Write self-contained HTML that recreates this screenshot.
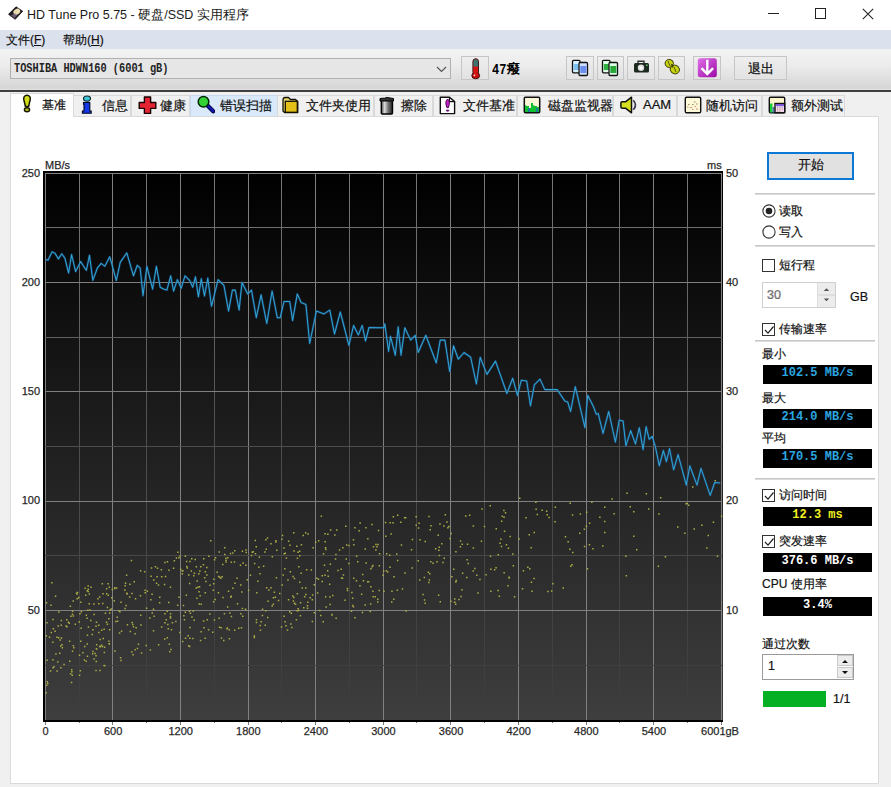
<!DOCTYPE html>
<html><head><meta charset="utf-8">
<style>
*{box-sizing:border-box;}
html,body{margin:0;padding:0;}
body{width:891px;height:787px;position:relative;overflow:hidden;background:#f0f0f0;font-family:"Liberation Sans",sans-serif;color:#000;font-size:12px;}
.a{position:absolute;white-space:nowrap;}
#title{left:0;top:0;width:891px;height:30px;background:#fff;}
#menu{left:0;top:30px;width:891px;height:19px;background:#dce2ed;}
#tool{left:0;top:49px;width:891px;height:41px;background:linear-gradient(#f3f3f3,#ececec 40%,#d6d6d6 96%,#e6e6e6);}
#sep{left:0;top:90px;width:891px;height:2px;background:#3f3f3f;}
.btn{position:absolute;background:linear-gradient(#eeeeee,#e2e2e2);border:1px solid #c6c6c6;}
.tab{position:absolute;top:95px;height:21px;background:#f0f0f0;border:1px solid #d9d9d9;border-bottom:none;}
.tab .t{position:absolute;top:2px;font-size:12.5px;color:#111;-webkit-text-stroke:0.2px #111;white-space:nowrap;}
.tab svg{position:absolute;}
#page{left:10px;top:116px;width:869px;height:668px;background:#fff;border:1px solid #dadada;}
.lbl{position:absolute;font-size:12px;color:#111;-webkit-text-stroke:0.2px #111;white-space:nowrap;}
.box{position:absolute;left:763px;width:109px;height:19px;background:#000;}
.box span{position:absolute;top:3px;left:0;width:100%;text-align:center;font-family:"Liberation Mono",monospace;font-weight:bold;font-size:12px;line-height:10px;}
.hsep{position:absolute;left:755px;width:120px;height:2px;background:#dcdcdc;border-top:1px solid #c8c8c8;}
.cb{position:absolute;left:762px;width:13px;height:13px;border:1px solid #333;background:#fff;}
</style></head><body>

<div id="title" class="a">
  <svg class="a" style="left:7px;top:5px" width="17" height="16" viewBox="0 0 17 16">
    <path d="M1.5 9.3 L9 1.8 L15.7 6.2 L8.2 14.3 Z" fill="#1e1a22" stroke="#111" stroke-width="0.8" stroke-linejoin="round"/>
    <ellipse cx="9.8" cy="6.8" rx="3.6" ry="2.8" transform="rotate(-35 9.8 6.8)" fill="#e9dcae"/>
    <path d="M4 10.5 L8 8 L10.5 10 L7.5 13 Z" fill="#8a7890" opacity="0.7"/>
  </svg>
  <div class="a" style="left:27px;top:7px;font-size:12.5px;color:#1a1a1a;">HD Tune Pro 5.75 - 硬盘/SSD 实用程序</div>
  <div class="a" style="left:768px;top:13px;width:11px;height:1px;background:#222"></div>
  <div class="a" style="left:815px;top:8px;width:11px;height:11px;border:1px solid #222"></div>
  <svg class="a" style="left:862px;top:8px" width="12" height="12"><path d="M0.8 0.8L11.2 11.2M11.2 0.8L0.8 11.2" stroke="#222" stroke-width="1.05"/></svg>
</div>

<div id="menu" class="a">
  <div class="a" style="left:6px;top:2px;font-size:12px;color:#111;-webkit-text-stroke:0.2px #111">文件(<u>F</u>)</div>
  <div class="a" style="left:63px;top:2px;font-size:12px;color:#111;-webkit-text-stroke:0.2px #111">帮助(<u>H</u>)</div>
</div>

<div id="tool" class="a">
  <div class="a" style="left:10px;top:9px;width:441px;height:21px;background:#e6e6e6;border:1px solid #b0b0b0;"></div>
  <div class="a" style="left:14px;top:13px;font-family:'Liberation Mono',monospace;font-weight:bold;font-size:10.3px;line-height:10px;color:#222;transform:scaleY(1.2);transform-origin:0 0">TOSHIBA HDWN160 (6001 gB)</div>
  <svg class="a" style="left:436px;top:17px" width="11" height="7"><path d="M1 1L5.5 5.5L10 1" stroke="#555" fill="none" stroke-width="1.2"/></svg>

  <div class="btn" style="left:461px;top:7px;width:28px;height:24px;"></div>
  <svg class="a" style="left:470px;top:9px" width="12" height="22" viewBox="0 0 12 22">
    <rect x="2.9" y="0.7" width="5.6" height="16" rx="2.8" fill="#d41414" stroke="#2a0a0a" stroke-width="0.9"/>
    <path d="M3.4 3.4 Q3.4 1.2 5.7 1.2 Q8 1.2 8 3.4 V8.5 H3.4Z" fill="#3a7470"/>
    <ellipse cx="5.7" cy="17.6" rx="3.9" ry="3.2" fill="#c80c0c" stroke="#2a0a0a" stroke-width="0.9"/>
    <rect x="3.6" y="9" width="4.2" height="9" fill="#d41414"/>
    <circle cx="4.4" cy="17.3" r="0.9" fill="#fff" opacity="0.85"/>
  </svg>
  <div class="a" style="left:492px;top:16px;font-family:'Liberation Mono',monospace;font-weight:bold;font-size:12px;line-height:10px;transform:scaleY(1.2);">47</div>
  <div class="a" style="left:507px;top:12px;font-size:12.5px;font-weight:bold;">癈</div>

  <div class="btn" style="left:566px;top:7px;width:28px;height:24px;"></div>
  <svg class="a" style="left:571px;top:10px" width="18" height="18" viewBox="0 0 18 18">
    <rect x="1.5" y="1.3" width="7.5" height="12.5" rx="1" fill="#d8f0ff" stroke="#111" stroke-width="1.3"/>
    <rect x="2.8" y="5" width="5" height="6" fill="#7cc0f0"/>
    <rect x="8" y="3.5" width="8.5" height="13" rx="1" fill="#cfe2ff" stroke="#111" stroke-width="1.3"/>
    <rect x="9.3" y="7" width="6" height="7" fill="#6c8ef0"/>
  </svg>
  <div class="btn" style="left:597px;top:7px;width:27px;height:24px;"></div>
  <svg class="a" style="left:601px;top:10px" width="18" height="18" viewBox="0 0 18 18">
    <rect x="1.5" y="1.3" width="7.5" height="12.5" rx="1" fill="#e0ffe8" stroke="#111" stroke-width="1.3"/>
    <rect x="2.8" y="5" width="5" height="6" fill="#30b040"/>
    <rect x="8" y="3.5" width="8.5" height="13" rx="1" fill="#e0ffe8" stroke="#111" stroke-width="1.3"/>
    <rect x="9.3" y="7" width="6" height="7" fill="#28a838"/>
  </svg>
  <div class="btn" style="left:627px;top:7px;width:28px;height:24px;"></div>
  <svg class="a" style="left:633px;top:11px" width="17" height="14" viewBox="0 0 17 14">
    <path d="M5 3 V1.2 H11 V3" fill="none" stroke="#333" stroke-width="1.4"/>
    <rect x="1" y="3" width="15" height="9.5" rx="1.5" fill="#1c2a20"/>
    <circle cx="8" cy="7.8" r="3.2" fill="#ddd"/>
    <circle cx="8" cy="7.8" r="1.6" fill="#fff"/>
    <rect x="13" y="4.5" width="1.5" height="1.5" fill="#6c6"/>
  </svg>
  <div class="btn" style="left:658px;top:7px;width:27px;height:24px;"></div>
  <svg class="a" style="left:663px;top:9px" width="19" height="18" viewBox="0 0 19 18">
    <g stroke="#2a2a00" stroke-width="0.9" fill="#c8d412">
      <path d="M2 5 Q3 1 7 1.5 Q10.5 2 10.5 5.5 Q10 9 6.5 9.5 Q2.5 9.5 2 5Z"/>
      <path d="M7 11 Q7.5 7.5 11.5 7 Q15.5 7 16.5 11 Q16.5 15.5 12 16 Q7.5 15.5 7 11Z"/>
    </g>
    <path d="M5 3 L7 8 M11 9 L13 14" stroke="#5a5a10" stroke-width="1"/>
    <path d="M8.5 6 L10 9.5" stroke="#3a3a00" stroke-width="1.2"/>
  </svg>
  <div class="btn" style="left:693px;top:7px;width:28px;height:24px;"></div>
  <svg class="a" style="left:697px;top:9px" width="21" height="20" viewBox="0 0 21 20">
    <defs><linearGradient id="pg" x1="0" y1="0" x2="1" y2="1"><stop offset="0" stop-color="#e070e8"/><stop offset="1" stop-color="#9a0aa6"/></linearGradient></defs>
    <rect x="0.8" y="0.3" width="19" height="19" rx="2.5" fill="url(#pg)"/>
    <path d="M10.3 1.8 V16 M4.5 10.2 L10.3 16 L16.1 10.2" stroke="#fff" stroke-width="2.4" fill="none" stroke-linejoin="miter"/>
  </svg>
  <div class="btn" style="left:734px;top:7px;width:53px;height:24px;"></div>
  <div class="a" style="left:748px;top:12px;font-size:12.5px;color:#111;-webkit-text-stroke:0.25px #111">退出</div>
</div>
<div id="sep" class="a"></div>

<div id="page" class="a"></div>

<div class="tab" style="left:10px;top:93px;width:64px;height:24px;background:#fff;z-index:2;border-color:#d9d9d9">
  <svg style="left:11px;top:0px" width="10" height="19" viewBox="0 0 10 19">
    <path d="M5 1.3 C7.6 1.3 8.6 3.3 8.2 5.5 L6.6 12.4 H3.4 L1.8 5.5 C1.4 3.3 2.4 1.3 5 1.3Z" fill="#d2dc18" stroke="#161600" stroke-width="1.5"/>
    <ellipse cx="5" cy="15.8" rx="2.6" ry="2" fill="#b8c020" stroke="#161600" stroke-width="1.4"/>
  </svg>
  <span class="t" style="left:31px;top:3px;font-size:12px">基准</span></div>
<div class="tab" style="left:73px;width:58px;">
  <svg style="left:7px;top:-1px" width="12" height="19" viewBox="0 0 12 19">
    <ellipse cx="6" cy="3.6" rx="3.5" ry="2.6" fill="#40c4dc" stroke="#0a2a30" stroke-width="1.2"/>
    <path d="M2.5 7.5 H8.8 V16 H10.2 V18.2 H1.4 V16 H3 V9.3 H2.5Z" fill="#1438e8" stroke="#00061a" stroke-width="1.1"/>
  </svg>
  <span class="t" style="left:28px">信息</span></div>
<div class="tab" style="left:131px;width:59px;">
  <svg style="left:6px;top:0px" width="19" height="18" viewBox="0 0 19 18">
    <path d="M6.4 1 H12.6 V6.5 H17.8 V12.4 H12.6 V17.4 H6.4 V12.4 H1.2 V6.5 H6.4Z" fill="#e42432" stroke="#1a0000" stroke-width="1.4" stroke-linejoin="round"/>
  </svg>
  <span class="t" style="left:28px">健康</span></div>
<div class="tab" style="left:190px;width:88px;background:#d9e9f9;border-color:#c8daf0">
  <svg style="left:5px;top:-1px" width="19" height="19" viewBox="0 0 19 19">
    <path d="M11.5 10.5 L17.2 16.3" stroke="#000050" stroke-width="4.2" stroke-linecap="round"/>
    <path d="M11.5 10.5 L17 16" stroke="#1818b0" stroke-width="2.4" stroke-linecap="round"/>
    <circle cx="7.5" cy="6.8" r="5.3" fill="#34d234" stroke="#002800" stroke-width="1.5"/>
  </svg>
  <span class="t" style="left:29px">错误扫描</span></div>
<div class="tab" style="left:277px;width:97px;">
  <svg style="left:4px;top:0px" width="18" height="18" viewBox="0 0 18 18">
    <path d="M1 4 Q1 1.5 3 1.5 H6.5 L8.5 3.5 H13.5 L15.8 5.5 V16.5 H2.5 L1 15Z" fill="#e6d870" stroke="#141000" stroke-width="1.3" stroke-linejoin="round"/>
    <rect x="3.3" y="5.3" width="12" height="11" fill="#e2c018" stroke="#141000" stroke-width="1.3"/>
  </svg>
  <span class="t" style="left:28px">文件夹使用</span></div>
<div class="tab" style="left:374px;width:59px;">
  <svg style="left:4px;top:0px" width="16" height="19" viewBox="0 0 16 19">
    <defs><linearGradient id="tg" x1="0" x2="1"><stop offset="0" stop-color="#444"/><stop offset="0.3" stop-color="#ddd"/><stop offset="0.6" stop-color="#777"/><stop offset="1" stop-color="#222"/></linearGradient></defs>
    <path d="M2.3 4 H13.5 V17 Q13.5 18 12.5 18 H3.3 Q2.3 18 2.3 17Z" fill="url(#tg)" stroke="#000" stroke-width="1.4"/>
    <path d="M1 2.5 Q4 2 6 2.3 Q7 1 8.5 1.5 Q11 2 14.5 2.5 V5 H1Z" fill="#333" stroke="#000" stroke-width="1"/>
  </svg>
  <span class="t" style="left:26px">擦除</span></div>
<div class="tab" style="left:433px;width:84px;">
  <svg style="left:5px;top:0px" width="17" height="19" viewBox="0 0 17 19">
    <path d="M1.3 1.3 H10.5 L15.6 5.6 V17.6 H1.3Z" fill="#fff" stroke="#111" stroke-width="1.4" stroke-linejoin="round"/>
    <path d="M10.5 1.3 V5.6 H15.6" fill="none" stroke="#111" stroke-width="1.1"/>
    <path d="M8.6 3 C10.6 4.5 11 7 9.5 11.6 H7.8 C6.2 7 6.6 4.5 8.6 3Z" fill="#c020c8" stroke="#400040" stroke-width="0.9"/>
    <ellipse cx="8.6" cy="14.6" rx="1.8" ry="1.1" fill="#702070"/>
  </svg>
  <span class="t" style="left:29px">文件基准</span></div>
<div class="tab" style="left:517px;width:96px;">
  <svg style="left:5px;top:0px" width="18" height="18" viewBox="0 0 18 18">
    <rect x="1.3" y="1.3" width="15.4" height="15.4" rx="1" fill="#fdf6d8" stroke="#111" stroke-width="1.5"/>
    <path d="M2 9 L4 10 V16 H2Z M4 10 H6 V12 H8 V7 H10 V9 L12 10 V16 H4Z M12 10 H14 V11 H16 V16 H12Z" fill="#10c030"/>
    <path d="M5 12 H7 V16 H5Z M13 12 H15 V16 H13Z" fill="#1a7aa0"/>
  </svg>
  <span class="t" style="left:30px">磁盘监视器</span></div>
<div class="tab" style="left:613px;width:64px;">
  <svg style="left:6px;top:0px" width="19" height="18" viewBox="0 0 19 18">
    <path d="M11.5 1.2 V16.8 L5.5 12.2 H2.2 Q0.9 12.2 0.9 10.9 V7.1 Q0.9 5.8 2.2 5.8 H5.5Z" fill="#d6e020" stroke="#111" stroke-width="1.5" stroke-linejoin="round"/>
    <path d="M13.3 4.2 Q17.6 9 13.3 13.8" fill="none" stroke="#3c3650" stroke-width="1.7"/>
  </svg>
  <span class="t" style="left:29px;font-size:13px;top:1px">AAM</span></div>
<div class="tab" style="left:677px;width:85px;">
  <svg style="left:6px;top:0px" width="18" height="18" viewBox="0 0 18 18">
    <rect x="1.3" y="1.3" width="15.4" height="15.4" rx="1.2" fill="#fcf8d8" stroke="#111" stroke-width="1.4"/>
    <g fill="#9a8a60"><rect x="4" y="8" width="1.5" height="1"/><rect x="8" y="8" width="1.5" height="1"/><rect x="10" y="5.5" width="1.5" height="1"/><rect x="12" y="7.5" width="1.5" height="1"/></g>
    <g fill="#d89070"><rect x="3" y="10.5" width="1.5" height="1"/><rect x="6" y="11" width="2" height="1"/><rect x="10.5" y="10" width="1.5" height="1"/><rect x="8" y="13" width="1.5" height="1"/><rect x="12" y="12.5" width="2" height="1"/></g>
  </svg>
  <span class="t" style="left:28px">随机访问</span></div>
<div class="tab" style="left:762px;width:83px;">
  <svg style="left:5px;top:0px" width="18" height="18" viewBox="0 0 18 18">
    <rect x="1.3" y="1.3" width="15.4" height="15.4" rx="1.2" fill="#fcf6cc" stroke="#111" stroke-width="1.4"/>
    <rect x="2" y="7.5" width="2.5" height="9" fill="#18d038"/>
    <rect x="4.5" y="11" width="2" height="5.5" fill="#4a70b0"/>
    <rect x="7" y="7.5" width="9.7" height="9.2" fill="#f0d8f0" stroke="#111" stroke-width="1.4"/>
    <rect x="7.6" y="8.2" width="8.5" height="1.6" fill="#6a40d8"/>
    <g fill="#7878a8"><rect x="9" y="10.5" width="1.2" height="1"/><rect x="11.3" y="10.5" width="1.2" height="1"/><rect x="13.6" y="10.5" width="1.2" height="1"/></g>
    <g fill="#c09070"><rect x="9" y="12.6" width="1.2" height="1"/><rect x="11.3" y="12.6" width="1.2" height="1"/><rect x="13.6" y="12.6" width="1.2" height="1"/><rect x="9" y="14.6" width="1.2" height="1"/><rect x="11.3" y="14.6" width="1.2" height="1"/></g>
  </svg>
  <span class="t" style="left:28px">额外测试</span></div>

<svg class="a" style="left:0;top:0" width="891" height="787" viewBox="0 0 891 787">
<defs><linearGradient id="bg" x1="0" y1="0" x2="0" y2="1"><stop offset="0" stop-color="#000"/><stop offset="1" stop-color="#3e3e3e"/></linearGradient><linearGradient id="mg" gradientUnits="userSpaceOnUse" x1="0" y1="173" x2="0" y2="720"><stop offset="0" stop-color="#787878"/><stop offset="0.5" stop-color="#4e4e4e"/><stop offset="1" stop-color="#3c3c3c"/></linearGradient></defs>
<rect x="43" y="171" width="680" height="551" fill="#000"/>
<rect x="45" y="173" width="678" height="547" fill="url(#bg)"/>
<line x1="45.5" y1="173" x2="45.5" y2="720" stroke="#808080" stroke-width="1"/>
<line x1="79.5" y1="173" x2="79.5" y2="720" stroke="url(#mg)" stroke-width="1"/>
<line x1="112.5" y1="173" x2="112.5" y2="720" stroke="#808080" stroke-width="1"/>
<line x1="146.5" y1="173" x2="146.5" y2="720" stroke="url(#mg)" stroke-width="1"/>
<line x1="180.5" y1="173" x2="180.5" y2="720" stroke="#808080" stroke-width="1"/>
<line x1="214.5" y1="173" x2="214.5" y2="720" stroke="url(#mg)" stroke-width="1"/>
<line x1="248.5" y1="173" x2="248.5" y2="720" stroke="#808080" stroke-width="1"/>
<line x1="281.5" y1="173" x2="281.5" y2="720" stroke="url(#mg)" stroke-width="1"/>
<line x1="315.5" y1="173" x2="315.5" y2="720" stroke="#808080" stroke-width="1"/>
<line x1="349.5" y1="173" x2="349.5" y2="720" stroke="url(#mg)" stroke-width="1"/>
<line x1="383.5" y1="173" x2="383.5" y2="720" stroke="#808080" stroke-width="1"/>
<line x1="416.5" y1="173" x2="416.5" y2="720" stroke="url(#mg)" stroke-width="1"/>
<line x1="450.5" y1="173" x2="450.5" y2="720" stroke="#808080" stroke-width="1"/>
<line x1="484.5" y1="173" x2="484.5" y2="720" stroke="url(#mg)" stroke-width="1"/>
<line x1="518.5" y1="173" x2="518.5" y2="720" stroke="#808080" stroke-width="1"/>
<line x1="552.5" y1="173" x2="552.5" y2="720" stroke="url(#mg)" stroke-width="1"/>
<line x1="586.5" y1="173" x2="586.5" y2="720" stroke="#808080" stroke-width="1"/>
<line x1="619.5" y1="173" x2="619.5" y2="720" stroke="url(#mg)" stroke-width="1"/>
<line x1="653.5" y1="173" x2="653.5" y2="720" stroke="#808080" stroke-width="1"/>
<line x1="687.5" y1="173" x2="687.5" y2="720" stroke="url(#mg)" stroke-width="1"/>
<line x1="721.5" y1="173" x2="721.5" y2="720" stroke="#808080" stroke-width="1"/>
<line x1="45" y1="173.5" x2="722" y2="173.5" stroke="#808080" stroke-width="1"/>
<line x1="45" y1="227.5" x2="722" y2="227.5" stroke="url(#mg)" stroke-width="1"/>
<line x1="45" y1="282.5" x2="722" y2="282.5" stroke="#808080" stroke-width="1"/>
<line x1="45" y1="337.5" x2="722" y2="337.5" stroke="url(#mg)" stroke-width="1"/>
<line x1="45" y1="391.5" x2="722" y2="391.5" stroke="#808080" stroke-width="1"/>
<line x1="45" y1="446.5" x2="722" y2="446.5" stroke="url(#mg)" stroke-width="1"/>
<line x1="45" y1="501.5" x2="722" y2="501.5" stroke="#808080" stroke-width="1"/>
<line x1="45" y1="555.5" x2="722" y2="555.5" stroke="url(#mg)" stroke-width="1"/>
<line x1="45" y1="610.5" x2="722" y2="610.5" stroke="#808080" stroke-width="1"/>
<line x1="45" y1="665.5" x2="722" y2="665.5" stroke="url(#mg)" stroke-width="1"/>
<path d="M350.8 610.5h1.5v1.5h-1.5zM169.8 617.2h1.5v1.5h-1.5zM108.6 586.6h1.5v1.5h-1.5zM513.8 596.0h1.5v1.5h-1.5zM151.5 612.2h1.5v1.5h-1.5zM173.6 560.0h1.5v1.5h-1.5zM354.2 617.0h1.5v1.5h-1.5zM258.1 566.5h1.5v1.5h-1.5zM45.4 691.9h1.5v1.5h-1.5zM94.4 652.7h1.5v1.5h-1.5zM103.9 664.9h1.5v1.5h-1.5zM124.8 582.5h1.5v1.5h-1.5zM583.8 545.8h1.5v1.5h-1.5zM133.5 580.9h1.5v1.5h-1.5zM188.9 645.8h1.5v1.5h-1.5zM187.4 634.9h1.5v1.5h-1.5zM189.2 626.8h1.5v1.5h-1.5zM245.3 549.3h1.5v1.5h-1.5zM209.3 584.4h1.5v1.5h-1.5zM168.6 643.4h1.5v1.5h-1.5zM213.7 619.2h1.5v1.5h-1.5zM329.9 529.3h1.5v1.5h-1.5zM448.2 525.8h1.5v1.5h-1.5zM91.5 633.8h1.5v1.5h-1.5zM460.3 595.8h1.5v1.5h-1.5zM56.2 636.6h1.5v1.5h-1.5zM164.1 613.1h1.5v1.5h-1.5zM139.9 570.1h1.5v1.5h-1.5zM59.4 639.2h1.5v1.5h-1.5zM95.9 648.3h1.5v1.5h-1.5zM467.5 562.7h1.5v1.5h-1.5zM99.2 669.8h1.5v1.5h-1.5zM101.6 582.9h1.5v1.5h-1.5zM370.1 586.0h1.5v1.5h-1.5zM217.9 575.8h1.5v1.5h-1.5zM181.9 640.7h1.5v1.5h-1.5zM179.2 631.7h1.5v1.5h-1.5zM439.2 523.2h1.5v1.5h-1.5zM232.1 587.5h1.5v1.5h-1.5zM189.7 612.6h1.5v1.5h-1.5zM95.5 660.7h1.5v1.5h-1.5zM57.9 636.9h1.5v1.5h-1.5zM140.2 624.3h1.5v1.5h-1.5zM507.7 547.6h1.5v1.5h-1.5zM52.3 666.9h1.5v1.5h-1.5zM229.1 612.3h1.5v1.5h-1.5zM657.6 565.6h1.5v1.5h-1.5zM132.8 626.0h1.5v1.5h-1.5zM299.7 615.0h1.5v1.5h-1.5zM485.3 574.1h1.5v1.5h-1.5zM101.0 629.5h1.5v1.5h-1.5zM374.5 595.9h1.5v1.5h-1.5zM585.7 525.6h1.5v1.5h-1.5zM140.0 614.4h1.5v1.5h-1.5zM686.6 502.7h1.5v1.5h-1.5zM255.7 621.7h1.5v1.5h-1.5zM432.3 562.4h1.5v1.5h-1.5zM454.1 601.5h1.5v1.5h-1.5zM512.1 553.2h1.5v1.5h-1.5zM227.0 556.9h1.5v1.5h-1.5zM367.1 537.9h1.5v1.5h-1.5zM571.8 514.3h1.5v1.5h-1.5zM509.4 535.7h1.5v1.5h-1.5zM115.9 587.3h1.5v1.5h-1.5zM214.4 598.8h1.5v1.5h-1.5zM299.0 581.6h1.5v1.5h-1.5zM183.1 615.1h1.5v1.5h-1.5zM220.4 627.0h1.5v1.5h-1.5zM579.0 532.4h1.5v1.5h-1.5zM57.0 661.2h1.5v1.5h-1.5zM172.8 567.4h1.5v1.5h-1.5zM429.5 529.0h1.5v1.5h-1.5zM265.9 587.1h1.5v1.5h-1.5zM451.2 576.0h1.5v1.5h-1.5zM167.5 627.9h1.5v1.5h-1.5zM176.9 604.5h1.5v1.5h-1.5zM533.5 531.7h1.5v1.5h-1.5zM52.2 658.9h1.5v1.5h-1.5zM495.3 566.9h1.5v1.5h-1.5zM405.4 610.2h1.5v1.5h-1.5zM707.5 534.7h1.5v1.5h-1.5zM218.5 551.3h1.5v1.5h-1.5zM299.0 554.9h1.5v1.5h-1.5zM592.2 548.1h1.5v1.5h-1.5zM153.1 579.3h1.5v1.5h-1.5zM458.2 598.7h1.5v1.5h-1.5zM292.1 595.2h1.5v1.5h-1.5zM245.1 564.6h1.5v1.5h-1.5zM550.9 590.2h1.5v1.5h-1.5zM335.4 617.4h1.5v1.5h-1.5zM453.0 568.4h1.5v1.5h-1.5zM182.7 604.7h1.5v1.5h-1.5zM353.0 577.5h1.5v1.5h-1.5zM541.4 509.4h1.5v1.5h-1.5zM287.8 599.0h1.5v1.5h-1.5zM554.3 520.9h1.5v1.5h-1.5zM71.7 613.4h1.5v1.5h-1.5zM466.4 558.9h1.5v1.5h-1.5zM103.4 628.6h1.5v1.5h-1.5zM297.3 551.4h1.5v1.5h-1.5zM95.3 655.1h1.5v1.5h-1.5zM564.7 536.0h1.5v1.5h-1.5zM265.0 609.9h1.5v1.5h-1.5zM334.1 534.2h1.5v1.5h-1.5zM98.1 631.8h1.5v1.5h-1.5zM508.3 576.6h1.5v1.5h-1.5zM189.2 560.8h1.5v1.5h-1.5zM236.3 577.6h1.5v1.5h-1.5zM292.7 600.3h1.5v1.5h-1.5zM259.7 629.6h1.5v1.5h-1.5zM212.9 583.1h1.5v1.5h-1.5zM312.4 547.0h1.5v1.5h-1.5zM60.0 645.3h1.5v1.5h-1.5zM588.7 544.0h1.5v1.5h-1.5zM101.8 645.7h1.5v1.5h-1.5zM102.3 592.9h1.5v1.5h-1.5zM483.7 525.8h1.5v1.5h-1.5zM311.6 620.8h1.5v1.5h-1.5zM329.2 596.3h1.5v1.5h-1.5zM298.9 550.5h1.5v1.5h-1.5zM85.0 594.6h1.5v1.5h-1.5zM569.5 502.6h1.5v1.5h-1.5zM69.6 605.4h1.5v1.5h-1.5zM447.1 526.9h1.5v1.5h-1.5zM255.7 618.9h1.5v1.5h-1.5zM371.2 523.7h1.5v1.5h-1.5zM489.5 504.9h1.5v1.5h-1.5zM151.3 593.6h1.5v1.5h-1.5zM225.2 559.6h1.5v1.5h-1.5zM45.9 684.6h1.5v1.5h-1.5zM100.7 644.4h1.5v1.5h-1.5zM369.5 610.7h1.5v1.5h-1.5zM664.7 555.9h1.5v1.5h-1.5zM255.5 546.0h1.5v1.5h-1.5zM116.5 616.4h1.5v1.5h-1.5zM53.3 665.9h1.5v1.5h-1.5zM461.5 543.5h1.5v1.5h-1.5zM246.6 578.9h1.5v1.5h-1.5zM218.4 617.6h1.5v1.5h-1.5zM604.0 506.5h1.5v1.5h-1.5zM166.6 637.1h1.5v1.5h-1.5zM105.9 593.1h1.5v1.5h-1.5zM320.0 614.7h1.5v1.5h-1.5zM305.9 569.0h1.5v1.5h-1.5zM57.5 625.3h1.5v1.5h-1.5zM116.8 620.4h1.5v1.5h-1.5zM283.3 547.3h1.5v1.5h-1.5zM468.9 514.4h1.5v1.5h-1.5zM289.2 544.5h1.5v1.5h-1.5zM423.8 599.3h1.5v1.5h-1.5zM207.8 629.1h1.5v1.5h-1.5zM415.4 516.1h1.5v1.5h-1.5zM490.1 568.6h1.5v1.5h-1.5zM303.0 607.0h1.5v1.5h-1.5zM179.9 568.6h1.5v1.5h-1.5zM430.0 561.1h1.5v1.5h-1.5zM429.0 573.0h1.5v1.5h-1.5zM498.6 595.5h1.5v1.5h-1.5zM362.7 580.0h1.5v1.5h-1.5zM321.5 580.8h1.5v1.5h-1.5zM261.8 608.6h1.5v1.5h-1.5zM446.2 521.2h1.5v1.5h-1.5zM384.8 521.8h1.5v1.5h-1.5zM400.7 544.2h1.5v1.5h-1.5zM204.4 637.4h1.5v1.5h-1.5zM111.6 588.7h1.5v1.5h-1.5zM687.9 504.6h1.5v1.5h-1.5zM264.5 624.6h1.5v1.5h-1.5zM313.5 583.9h1.5v1.5h-1.5zM66.0 618.9h1.5v1.5h-1.5zM364.5 548.3h1.5v1.5h-1.5zM364.4 604.2h1.5v1.5h-1.5zM181.6 572.9h1.5v1.5h-1.5zM78.8 654.6h1.5v1.5h-1.5zM527.1 566.4h1.5v1.5h-1.5zM345.9 544.3h1.5v1.5h-1.5zM525.3 517.1h1.5v1.5h-1.5zM199.8 639.7h1.5v1.5h-1.5zM232.1 552.2h1.5v1.5h-1.5zM342.7 574.2h1.5v1.5h-1.5zM450.4 532.8h1.5v1.5h-1.5zM103.9 646.5h1.5v1.5h-1.5zM233.7 561.3h1.5v1.5h-1.5zM712.7 521.4h1.5v1.5h-1.5zM382.9 570.4h1.5v1.5h-1.5zM572.0 551.8h1.5v1.5h-1.5zM204.5 570.9h1.5v1.5h-1.5zM382.3 574.4h1.5v1.5h-1.5zM166.7 561.1h1.5v1.5h-1.5zM338.8 549.2h1.5v1.5h-1.5zM143.9 570.9h1.5v1.5h-1.5zM224.0 553.8h1.5v1.5h-1.5zM161.0 576.0h1.5v1.5h-1.5zM86.3 617.6h1.5v1.5h-1.5zM701.1 524.5h1.5v1.5h-1.5zM71.5 674.5h1.5v1.5h-1.5zM310.6 569.2h1.5v1.5h-1.5zM200.4 603.5h1.5v1.5h-1.5zM291.1 626.8h1.5v1.5h-1.5zM71.8 650.6h1.5v1.5h-1.5zM190.6 570.2h1.5v1.5h-1.5zM155.8 582.6h1.5v1.5h-1.5zM253.6 636.8h1.5v1.5h-1.5zM303.9 596.1h1.5v1.5h-1.5zM230.6 561.5h1.5v1.5h-1.5zM528.5 534.1h1.5v1.5h-1.5zM658.2 513.2h1.5v1.5h-1.5zM396.0 553.2h1.5v1.5h-1.5zM72.6 644.9h1.5v1.5h-1.5zM256.1 592.0h1.5v1.5h-1.5zM522.7 570.0h1.5v1.5h-1.5zM144.5 591.9h1.5v1.5h-1.5zM319.0 609.7h1.5v1.5h-1.5zM242.4 562.3h1.5v1.5h-1.5zM61.6 646.9h1.5v1.5h-1.5zM191.2 616.3h1.5v1.5h-1.5zM472.6 547.2h1.5v1.5h-1.5zM85.6 614.4h1.5v1.5h-1.5zM234.2 582.4h1.5v1.5h-1.5zM157.7 584.3h1.5v1.5h-1.5zM276.1 549.5h1.5v1.5h-1.5zM518.3 538.2h1.5v1.5h-1.5zM87.5 588.4h1.5v1.5h-1.5zM265.1 539.1h1.5v1.5h-1.5zM222.0 563.7h1.5v1.5h-1.5zM290.1 623.3h1.5v1.5h-1.5zM322.8 553.0h1.5v1.5h-1.5zM659.9 497.1h1.5v1.5h-1.5zM253.6 635.2h1.5v1.5h-1.5zM175.1 620.7h1.5v1.5h-1.5zM45.6 635.1h1.5v1.5h-1.5zM152.8 608.5h1.5v1.5h-1.5zM294.8 603.6h1.5v1.5h-1.5zM205.2 580.7h1.5v1.5h-1.5zM392.3 521.9h1.5v1.5h-1.5zM114.1 587.0h1.5v1.5h-1.5zM633.0 511.0h1.5v1.5h-1.5zM529.0 568.1h1.5v1.5h-1.5zM428.6 579.3h1.5v1.5h-1.5zM129.6 630.8h1.5v1.5h-1.5zM169.8 613.0h1.5v1.5h-1.5zM77.9 596.8h1.5v1.5h-1.5zM268.1 589.3h1.5v1.5h-1.5zM297.4 608.0h1.5v1.5h-1.5zM236.8 603.1h1.5v1.5h-1.5zM585.9 511.4h1.5v1.5h-1.5zM375.1 549.3h1.5v1.5h-1.5zM427.6 571.6h1.5v1.5h-1.5zM198.8 586.0h1.5v1.5h-1.5zM79.6 670.0h1.5v1.5h-1.5zM98.0 624.5h1.5v1.5h-1.5zM372.4 596.1h1.5v1.5h-1.5zM84.0 645.8h1.5v1.5h-1.5zM535.1 501.6h1.5v1.5h-1.5zM125.3 604.8h1.5v1.5h-1.5zM254.6 539.7h1.5v1.5h-1.5zM693.5 528.2h1.5v1.5h-1.5zM521.8 587.9h1.5v1.5h-1.5zM434.9 547.9h1.5v1.5h-1.5zM284.3 621.0h1.5v1.5h-1.5zM108.6 643.2h1.5v1.5h-1.5zM504.8 512.1h1.5v1.5h-1.5zM281.8 534.8h1.5v1.5h-1.5zM317.7 578.6h1.5v1.5h-1.5zM193.5 619.6h1.5v1.5h-1.5zM169.0 650.9h1.5v1.5h-1.5zM474.1 567.8h1.5v1.5h-1.5zM305.0 587.2h1.5v1.5h-1.5zM393.3 576.0h1.5v1.5h-1.5zM377.0 598.6h1.5v1.5h-1.5zM716.7 555.4h1.5v1.5h-1.5zM351.9 604.7h1.5v1.5h-1.5zM234.0 550.1h1.5v1.5h-1.5zM583.6 528.6h1.5v1.5h-1.5zM69.9 672.9h1.5v1.5h-1.5zM124.4 607.7h1.5v1.5h-1.5zM184.8 637.5h1.5v1.5h-1.5zM178.2 596.4h1.5v1.5h-1.5zM274.6 596.5h1.5v1.5h-1.5zM167.1 623.7h1.5v1.5h-1.5zM132.3 654.0h1.5v1.5h-1.5zM286.7 629.2h1.5v1.5h-1.5zM254.7 553.0h1.5v1.5h-1.5zM321.5 575.1h1.5v1.5h-1.5zM203.9 577.1h1.5v1.5h-1.5zM348.1 562.7h1.5v1.5h-1.5zM499.3 542.4h1.5v1.5h-1.5zM329.4 603.8h1.5v1.5h-1.5zM104.7 612.6h1.5v1.5h-1.5zM497.4 589.7h1.5v1.5h-1.5zM60.7 637.3h1.5v1.5h-1.5zM359.2 585.0h1.5v1.5h-1.5zM90.0 619.8h1.5v1.5h-1.5zM186.6 567.2h1.5v1.5h-1.5zM546.5 514.0h1.5v1.5h-1.5zM125.9 574.6h1.5v1.5h-1.5zM61.3 643.9h1.5v1.5h-1.5zM120.2 601.4h1.5v1.5h-1.5zM129.2 583.5h1.5v1.5h-1.5zM391.2 590.6h1.5v1.5h-1.5zM324.8 547.1h1.5v1.5h-1.5zM422.3 593.8h1.5v1.5h-1.5zM324.4 541.1h1.5v1.5h-1.5zM150.8 567.3h1.5v1.5h-1.5zM76.1 593.3h1.5v1.5h-1.5zM267.3 600.4h1.5v1.5h-1.5zM311.6 599.0h1.5v1.5h-1.5zM293.7 577.7h1.5v1.5h-1.5zM336.0 529.3h1.5v1.5h-1.5zM86.7 634.5h1.5v1.5h-1.5zM195.5 587.2h1.5v1.5h-1.5zM372.2 590.6h1.5v1.5h-1.5zM51.1 581.9h1.5v1.5h-1.5zM449.3 537.8h1.5v1.5h-1.5zM443.5 557.4h1.5v1.5h-1.5zM554.6 506.4h1.5v1.5h-1.5zM316.9 592.3h1.5v1.5h-1.5zM266.9 616.7h1.5v1.5h-1.5zM479.2 578.8h1.5v1.5h-1.5zM60.1 666.9h1.5v1.5h-1.5zM48.8 636.6h1.5v1.5h-1.5zM95.7 621.5h1.5v1.5h-1.5zM300.4 572.5h1.5v1.5h-1.5zM93.3 658.2h1.5v1.5h-1.5zM415.5 524.4h1.5v1.5h-1.5zM325.4 606.2h1.5v1.5h-1.5zM66.2 625.9h1.5v1.5h-1.5zM571.3 564.0h1.5v1.5h-1.5zM441.0 543.1h1.5v1.5h-1.5zM281.4 584.3h1.5v1.5h-1.5zM287.2 579.3h1.5v1.5h-1.5zM202.9 620.3h1.5v1.5h-1.5zM218.8 626.6h1.5v1.5h-1.5zM353.1 543.9h1.5v1.5h-1.5zM114.2 650.3h1.5v1.5h-1.5zM417.8 527.3h1.5v1.5h-1.5zM111.0 597.1h1.5v1.5h-1.5zM126.7 624.0h1.5v1.5h-1.5zM530.7 581.4h1.5v1.5h-1.5zM224.0 547.1h1.5v1.5h-1.5zM216.4 571.4h1.5v1.5h-1.5zM372.8 546.0h1.5v1.5h-1.5zM220.7 637.2h1.5v1.5h-1.5zM351.1 591.8h1.5v1.5h-1.5zM280.8 626.2h1.5v1.5h-1.5zM114.0 587.7h1.5v1.5h-1.5zM86.5 589.9h1.5v1.5h-1.5zM97.2 597.9h1.5v1.5h-1.5zM284.5 552.5h1.5v1.5h-1.5zM327.1 533.5h1.5v1.5h-1.5zM424.5 540.7h1.5v1.5h-1.5zM677.0 526.2h1.5v1.5h-1.5zM103.4 664.7h1.5v1.5h-1.5zM692.0 486.3h1.5v1.5h-1.5zM591.1 501.5h1.5v1.5h-1.5zM320.6 515.5h1.5v1.5h-1.5zM222.3 596.8h1.5v1.5h-1.5zM163.8 583.8h1.5v1.5h-1.5zM206.1 574.3h1.5v1.5h-1.5zM169.7 586.5h1.5v1.5h-1.5zM98.1 603.0h1.5v1.5h-1.5zM295.6 619.0h1.5v1.5h-1.5zM306.7 604.9h1.5v1.5h-1.5zM301.5 587.2h1.5v1.5h-1.5zM54.4 630.4h1.5v1.5h-1.5zM140.8 652.3h1.5v1.5h-1.5zM136.7 647.7h1.5v1.5h-1.5zM296.7 557.5h1.5v1.5h-1.5zM93.4 613.8h1.5v1.5h-1.5zM252.5 551.1h1.5v1.5h-1.5zM685.3 503.0h1.5v1.5h-1.5zM153.4 615.4h1.5v1.5h-1.5zM706.1 547.2h1.5v1.5h-1.5zM80.1 601.4h1.5v1.5h-1.5zM188.0 574.2h1.5v1.5h-1.5zM359.4 522.3h1.5v1.5h-1.5zM73.1 647.0h1.5v1.5h-1.5zM259.4 624.7h1.5v1.5h-1.5zM326.9 569.9h1.5v1.5h-1.5zM240.1 612.9h1.5v1.5h-1.5zM439.5 601.0h1.5v1.5h-1.5zM110.5 608.3h1.5v1.5h-1.5zM392.6 516.0h1.5v1.5h-1.5zM226.9 606.3h1.5v1.5h-1.5zM105.8 621.6h1.5v1.5h-1.5zM344.3 599.6h1.5v1.5h-1.5zM385.7 570.0h1.5v1.5h-1.5zM376.2 546.0h1.5v1.5h-1.5zM385.0 535.6h1.5v1.5h-1.5zM586.7 568.1h1.5v1.5h-1.5zM60.5 624.4h1.5v1.5h-1.5zM88.6 593.2h1.5v1.5h-1.5zM170.7 628.9h1.5v1.5h-1.5zM466.1 576.7h1.5v1.5h-1.5zM304.9 532.0h1.5v1.5h-1.5zM258.6 556.4h1.5v1.5h-1.5zM270.3 586.9h1.5v1.5h-1.5zM68.9 640.6h1.5v1.5h-1.5zM548.3 516.8h1.5v1.5h-1.5zM208.1 555.5h1.5v1.5h-1.5zM285.2 625.1h1.5v1.5h-1.5zM325.1 548.8h1.5v1.5h-1.5zM401.7 588.2h1.5v1.5h-1.5zM146.6 590.6h1.5v1.5h-1.5zM337.3 569.7h1.5v1.5h-1.5zM645.6 492.9h1.5v1.5h-1.5zM131.4 621.8h1.5v1.5h-1.5zM76.4 598.1h1.5v1.5h-1.5zM365.2 526.9h1.5v1.5h-1.5zM361.7 611.7h1.5v1.5h-1.5zM126.1 592.5h1.5v1.5h-1.5zM389.0 554.6h1.5v1.5h-1.5zM292.3 575.7h1.5v1.5h-1.5zM352.7 606.0h1.5v1.5h-1.5zM56.3 670.3h1.5v1.5h-1.5zM459.7 545.9h1.5v1.5h-1.5zM85.4 660.6h1.5v1.5h-1.5zM309.5 596.9h1.5v1.5h-1.5zM230.5 595.5h1.5v1.5h-1.5zM157.9 644.0h1.5v1.5h-1.5zM328.9 583.4h1.5v1.5h-1.5zM95.9 644.1h1.5v1.5h-1.5zM230.0 596.5h1.5v1.5h-1.5zM145.5 644.7h1.5v1.5h-1.5zM213.8 558.9h1.5v1.5h-1.5zM223.7 613.1h1.5v1.5h-1.5zM365.4 562.2h1.5v1.5h-1.5zM195.6 565.9h1.5v1.5h-1.5zM275.7 576.9h1.5v1.5h-1.5zM160.9 626.2h1.5v1.5h-1.5zM198.1 572.9h1.5v1.5h-1.5zM76.8 591.7h1.5v1.5h-1.5zM109.4 609.2h1.5v1.5h-1.5zM87.4 585.3h1.5v1.5h-1.5zM164.2 621.9h1.5v1.5h-1.5zM262.9 565.5h1.5v1.5h-1.5zM285.6 557.3h1.5v1.5h-1.5zM221.4 576.0h1.5v1.5h-1.5zM226.6 627.3h1.5v1.5h-1.5zM391.0 601.2h1.5v1.5h-1.5zM324.3 574.5h1.5v1.5h-1.5zM196.4 580.2h1.5v1.5h-1.5zM238.0 627.5h1.5v1.5h-1.5zM313.6 612.0h1.5v1.5h-1.5zM95.3 669.7h1.5v1.5h-1.5zM393.0 598.5h1.5v1.5h-1.5zM714.5 480.1h1.5v1.5h-1.5zM119.8 656.9h1.5v1.5h-1.5zM438.7 554.7h1.5v1.5h-1.5zM500.7 545.7h1.5v1.5h-1.5zM272.7 597.0h1.5v1.5h-1.5zM193.7 572.5h1.5v1.5h-1.5zM113.5 600.1h1.5v1.5h-1.5zM83.7 659.2h1.5v1.5h-1.5zM181.4 570.2h1.5v1.5h-1.5zM169.7 615.8h1.5v1.5h-1.5zM74.6 623.4h1.5v1.5h-1.5zM170.2 648.7h1.5v1.5h-1.5zM500.9 520.4h1.5v1.5h-1.5zM378.6 564.9h1.5v1.5h-1.5zM403.9 517.1h1.5v1.5h-1.5zM296.0 545.6h1.5v1.5h-1.5zM383.2 590.5h1.5v1.5h-1.5zM206.5 619.1h1.5v1.5h-1.5zM629.5 506.1h1.5v1.5h-1.5zM533.3 577.8h1.5v1.5h-1.5zM154.7 566.0h1.5v1.5h-1.5zM302.5 534.7h1.5v1.5h-1.5zM70.3 615.4h1.5v1.5h-1.5zM120.8 630.6h1.5v1.5h-1.5zM159.0 596.4h1.5v1.5h-1.5zM307.3 533.2h1.5v1.5h-1.5zM175.7 557.3h1.5v1.5h-1.5zM442.2 561.8h1.5v1.5h-1.5zM134.3 632.9h1.5v1.5h-1.5zM72.6 615.2h1.5v1.5h-1.5zM562.5 587.2h1.5v1.5h-1.5zM317.9 540.0h1.5v1.5h-1.5zM87.0 609.5h1.5v1.5h-1.5zM455.2 551.1h1.5v1.5h-1.5zM179.3 555.2h1.5v1.5h-1.5zM46.3 621.9h1.5v1.5h-1.5zM476.1 574.6h1.5v1.5h-1.5zM329.6 563.5h1.5v1.5h-1.5zM508.4 577.3h1.5v1.5h-1.5zM182.2 569.9h1.5v1.5h-1.5zM324.9 595.9h1.5v1.5h-1.5zM84.4 587.4h1.5v1.5h-1.5zM296.6 592.9h1.5v1.5h-1.5zM200.0 566.1h1.5v1.5h-1.5zM404.3 572.3h1.5v1.5h-1.5zM277.8 599.8h1.5v1.5h-1.5zM52.3 618.7h1.5v1.5h-1.5zM389.4 521.9h1.5v1.5h-1.5zM241.1 591.2h1.5v1.5h-1.5zM372.2 564.7h1.5v1.5h-1.5zM720.8 515.6h1.5v1.5h-1.5zM503.3 516.5h1.5v1.5h-1.5zM345.5 558.2h1.5v1.5h-1.5zM189.1 637.6h1.5v1.5h-1.5zM134.4 649.0h1.5v1.5h-1.5zM88.5 602.9h1.5v1.5h-1.5zM454.0 598.2h1.5v1.5h-1.5zM118.8 632.2h1.5v1.5h-1.5zM184.6 611.5h1.5v1.5h-1.5zM185.9 560.7h1.5v1.5h-1.5zM72.5 600.2h1.5v1.5h-1.5zM213.2 578.4h1.5v1.5h-1.5zM272.6 603.4h1.5v1.5h-1.5zM358.4 530.1h1.5v1.5h-1.5zM480.7 540.5h1.5v1.5h-1.5zM132.0 623.8h1.5v1.5h-1.5zM298.1 566.1h1.5v1.5h-1.5zM283.3 615.6h1.5v1.5h-1.5zM214.8 557.0h1.5v1.5h-1.5zM300.7 544.1h1.5v1.5h-1.5zM648.0 508.3h1.5v1.5h-1.5zM283.5 553.1h1.5v1.5h-1.5zM332.0 594.7h1.5v1.5h-1.5zM265.5 548.5h1.5v1.5h-1.5zM55.2 653.2h1.5v1.5h-1.5zM68.5 622.6h1.5v1.5h-1.5zM105.9 587.9h1.5v1.5h-1.5zM322.5 621.1h1.5v1.5h-1.5zM497.5 554.1h1.5v1.5h-1.5zM107.4 583.1h1.5v1.5h-1.5zM341.8 577.5h1.5v1.5h-1.5zM45.8 602.1h1.5v1.5h-1.5zM91.9 652.9h1.5v1.5h-1.5zM396.9 559.7h1.5v1.5h-1.5zM501.6 515.6h1.5v1.5h-1.5zM47.0 682.8h1.5v1.5h-1.5zM126.4 593.3h1.5v1.5h-1.5zM131.2 592.7h1.5v1.5h-1.5zM340.4 568.5h1.5v1.5h-1.5zM428.2 515.8h1.5v1.5h-1.5zM287.9 540.5h1.5v1.5h-1.5zM65.4 625.2h1.5v1.5h-1.5zM137.7 643.6h1.5v1.5h-1.5zM164.2 561.7h1.5v1.5h-1.5zM579.6 513.2h1.5v1.5h-1.5zM249.7 574.6h1.5v1.5h-1.5zM588.9 522.4h1.5v1.5h-1.5zM79.2 613.0h1.5v1.5h-1.5zM599.1 516.4h1.5v1.5h-1.5zM275.1 541.2h1.5v1.5h-1.5zM323.7 564.6h1.5v1.5h-1.5zM241.7 607.7h1.5v1.5h-1.5zM377.2 543.8h1.5v1.5h-1.5zM245.5 551.7h1.5v1.5h-1.5zM369.9 603.3h1.5v1.5h-1.5zM345.0 525.4h1.5v1.5h-1.5zM378.5 589.8h1.5v1.5h-1.5zM625.1 555.5h1.5v1.5h-1.5zM78.5 621.2h1.5v1.5h-1.5zM156.3 576.0h1.5v1.5h-1.5zM49.8 670.2h1.5v1.5h-1.5zM99.7 646.1h1.5v1.5h-1.5zM67.7 621.4h1.5v1.5h-1.5zM128.9 596.2h1.5v1.5h-1.5zM119.2 611.1h1.5v1.5h-1.5zM199.4 594.9h1.5v1.5h-1.5zM454.9 603.5h1.5v1.5h-1.5zM58.1 611.2h1.5v1.5h-1.5zM613.4 513.1h1.5v1.5h-1.5zM223.0 639.7h1.5v1.5h-1.5zM389.3 566.6h1.5v1.5h-1.5zM264.2 551.3h1.5v1.5h-1.5zM187.9 644.9h1.5v1.5h-1.5zM428.1 581.7h1.5v1.5h-1.5zM611.4 498.3h1.5v1.5h-1.5zM477.3 592.2h1.5v1.5h-1.5zM183.7 619.0h1.5v1.5h-1.5zM118.4 610.3h1.5v1.5h-1.5zM198.3 590.9h1.5v1.5h-1.5zM59.0 652.5h1.5v1.5h-1.5zM459.8 540.2h1.5v1.5h-1.5zM493.9 569.1h1.5v1.5h-1.5zM355.7 580.1h1.5v1.5h-1.5zM290.6 612.4h1.5v1.5h-1.5zM52.6 628.0h1.5v1.5h-1.5zM311.9 594.3h1.5v1.5h-1.5zM251.5 551.5h1.5v1.5h-1.5zM177.2 551.4h1.5v1.5h-1.5zM375.2 543.8h1.5v1.5h-1.5zM89.2 609.3h1.5v1.5h-1.5zM545.9 510.6h1.5v1.5h-1.5zM569.1 548.5h1.5v1.5h-1.5zM453.8 601.4h1.5v1.5h-1.5zM305.1 593.7h1.5v1.5h-1.5zM192.5 610.3h1.5v1.5h-1.5zM602.0 545.2h1.5v1.5h-1.5zM130.7 559.7h1.5v1.5h-1.5zM346.7 589.7h1.5v1.5h-1.5zM503.4 571.9h1.5v1.5h-1.5zM436.2 560.9h1.5v1.5h-1.5zM293.0 532.0h1.5v1.5h-1.5zM443.2 525.3h1.5v1.5h-1.5zM202.7 564.1h1.5v1.5h-1.5zM378.8 553.0h1.5v1.5h-1.5zM404.9 517.1h1.5v1.5h-1.5zM636.0 549.1h1.5v1.5h-1.5zM536.6 513.8h1.5v1.5h-1.5zM410.8 549.0h1.5v1.5h-1.5zM90.3 586.6h1.5v1.5h-1.5zM284.1 567.9h1.5v1.5h-1.5zM489.8 555.4h1.5v1.5h-1.5zM210.0 540.0h1.5v1.5h-1.5zM196.1 597.6h1.5v1.5h-1.5zM419.0 579.2h1.5v1.5h-1.5zM78.8 674.6h1.5v1.5h-1.5zM186.0 565.7h1.5v1.5h-1.5zM367.0 581.1h1.5v1.5h-1.5zM135.4 626.9h1.5v1.5h-1.5zM603.9 520.7h1.5v1.5h-1.5zM377.0 601.2h1.5v1.5h-1.5zM191.0 557.9h1.5v1.5h-1.5zM240.7 626.9h1.5v1.5h-1.5zM461.9 572.4h1.5v1.5h-1.5zM386.9 571.2h1.5v1.5h-1.5zM357.0 561.1h1.5v1.5h-1.5zM354.2 526.9h1.5v1.5h-1.5zM430.2 525.1h1.5v1.5h-1.5zM87.5 590.7h1.5v1.5h-1.5zM419.2 539.1h1.5v1.5h-1.5zM472.6 525.2h1.5v1.5h-1.5zM444.6 513.9h1.5v1.5h-1.5zM184.6 555.5h1.5v1.5h-1.5zM149.0 617.2h1.5v1.5h-1.5zM455.1 581.2h1.5v1.5h-1.5zM218.9 576.5h1.5v1.5h-1.5zM71.8 610.5h1.5v1.5h-1.5zM570.0 565.4h1.5v1.5h-1.5zM438.5 546.6h1.5v1.5h-1.5zM212.0 631.6h1.5v1.5h-1.5zM197.2 586.4h1.5v1.5h-1.5zM204.5 591.9h1.5v1.5h-1.5zM351.9 597.4h1.5v1.5h-1.5zM199.1 570.3h1.5v1.5h-1.5zM98.9 596.3h1.5v1.5h-1.5zM244.8 608.6h1.5v1.5h-1.5zM240.0 584.2h1.5v1.5h-1.5zM531.2 590.5h1.5v1.5h-1.5zM465.0 515.3h1.5v1.5h-1.5zM423.6 576.8h1.5v1.5h-1.5zM370.2 568.1h1.5v1.5h-1.5zM164.8 575.8h1.5v1.5h-1.5zM625.6 574.9h1.5v1.5h-1.5zM355.9 555.4h1.5v1.5h-1.5zM633.0 535.6h1.5v1.5h-1.5zM450.2 600.5h1.5v1.5h-1.5zM228.4 629.1h1.5v1.5h-1.5zM239.7 564.5h1.5v1.5h-1.5zM227.8 590.6h1.5v1.5h-1.5zM271.5 605.2h1.5v1.5h-1.5zM507.2 584.9h1.5v1.5h-1.5zM316.1 577.5h1.5v1.5h-1.5zM547.2 590.8h1.5v1.5h-1.5zM80.6 611.0h1.5v1.5h-1.5zM164.0 638.2h1.5v1.5h-1.5zM156.8 567.6h1.5v1.5h-1.5zM500.1 538.5h1.5v1.5h-1.5zM371.4 566.0h1.5v1.5h-1.5zM229.8 552.8h1.5v1.5h-1.5zM171.7 622.1h1.5v1.5h-1.5zM352.7 538.9h1.5v1.5h-1.5zM481.3 508.2h1.5v1.5h-1.5zM411.7 538.8h1.5v1.5h-1.5zM346.7 587.7h1.5v1.5h-1.5zM115.1 620.8h1.5v1.5h-1.5zM424.4 602.5h1.5v1.5h-1.5zM377.8 529.8h1.5v1.5h-1.5zM259.2 572.9h1.5v1.5h-1.5zM567.4 540.9h1.5v1.5h-1.5zM144.4 589.6h1.5v1.5h-1.5zM212.5 589.5h1.5v1.5h-1.5zM417.5 560.0h1.5v1.5h-1.5zM150.4 575.5h1.5v1.5h-1.5zM131.1 651.3h1.5v1.5h-1.5zM293.7 602.4h1.5v1.5h-1.5zM75.8 592.4h1.5v1.5h-1.5zM203.3 626.9h1.5v1.5h-1.5zM400.0 521.4h1.5v1.5h-1.5zM418.3 522.5h1.5v1.5h-1.5zM212.8 600.9h1.5v1.5h-1.5zM335.2 553.7h1.5v1.5h-1.5zM257.1 580.5h1.5v1.5h-1.5zM327.5 575.5h1.5v1.5h-1.5zM52.1 641.5h1.5v1.5h-1.5zM233.9 629.4h1.5v1.5h-1.5zM386.0 553.0h1.5v1.5h-1.5zM495.5 527.9h1.5v1.5h-1.5zM166.5 610.6h1.5v1.5h-1.5zM360.9 593.5h1.5v1.5h-1.5zM217.7 591.9h1.5v1.5h-1.5zM437.5 534.6h1.5v1.5h-1.5zM63.3 663.7h1.5v1.5h-1.5zM490.1 590.6h1.5v1.5h-1.5zM150.1 599.0h1.5v1.5h-1.5zM289.6 571.1h1.5v1.5h-1.5zM324.3 533.1h1.5v1.5h-1.5zM266.7 537.2h1.5v1.5h-1.5zM95.3 625.6h1.5v1.5h-1.5zM472.5 570.2h1.5v1.5h-1.5zM228.7 637.9h1.5v1.5h-1.5zM209.1 613.3h1.5v1.5h-1.5zM98.9 645.7h1.5v1.5h-1.5zM107.5 594.5h1.5v1.5h-1.5zM168.2 569.6h1.5v1.5h-1.5zM152.8 629.9h1.5v1.5h-1.5zM139.7 594.9h1.5v1.5h-1.5zM297.9 609.8h1.5v1.5h-1.5zM604.0 531.8h1.5v1.5h-1.5zM149.6 649.3h1.5v1.5h-1.5zM367.8 580.9h1.5v1.5h-1.5zM503.8 530.5h1.5v1.5h-1.5zM396.9 514.4h1.5v1.5h-1.5zM505.7 544.0h1.5v1.5h-1.5zM185.6 594.5h1.5v1.5h-1.5zM82.2 652.0h1.5v1.5h-1.5zM307.0 601.5h1.5v1.5h-1.5zM361.9 573.7h1.5v1.5h-1.5zM512.6 564.9h1.5v1.5h-1.5zM390.4 533.3h1.5v1.5h-1.5zM71.0 668.9h1.5v1.5h-1.5zM168.0 601.8h1.5v1.5h-1.5zM225.4 561.2h1.5v1.5h-1.5zM331.2 613.7h1.5v1.5h-1.5zM92.2 650.8h1.5v1.5h-1.5zM124.1 589.2h1.5v1.5h-1.5zM95.7 647.9h1.5v1.5h-1.5zM71.1 671.0h1.5v1.5h-1.5zM200.4 630.9h1.5v1.5h-1.5zM519.0 497.5h1.5v1.5h-1.5zM69.0 660.4h1.5v1.5h-1.5zM226.2 628.1h1.5v1.5h-1.5zM102.5 637.7h1.5v1.5h-1.5zM279.0 592.7h1.5v1.5h-1.5zM158.9 602.1h1.5v1.5h-1.5zM230.7 615.7h1.5v1.5h-1.5zM261.7 614.7h1.5v1.5h-1.5zM87.7 626.2h1.5v1.5h-1.5zM54.8 595.4h1.5v1.5h-1.5zM411.5 567.3h1.5v1.5h-1.5zM250.8 554.7h1.5v1.5h-1.5zM293.0 596.8h1.5v1.5h-1.5zM455.5 579.8h1.5v1.5h-1.5zM225.2 557.4h1.5v1.5h-1.5zM108.9 612.3h1.5v1.5h-1.5zM275.2 540.1h1.5v1.5h-1.5zM50.6 631.8h1.5v1.5h-1.5zM99.4 638.7h1.5v1.5h-1.5zM503.2 509.7h1.5v1.5h-1.5zM106.7 623.5h1.5v1.5h-1.5zM160.6 569.0h1.5v1.5h-1.5zM78.0 596.9h1.5v1.5h-1.5zM314.9 541.4h1.5v1.5h-1.5zM296.4 610.0h1.5v1.5h-1.5zM331.2 614.2h1.5v1.5h-1.5zM178.2 557.0h1.5v1.5h-1.5zM92.2 628.9h1.5v1.5h-1.5zM188.9 582.8h1.5v1.5h-1.5zM80.4 627.5h1.5v1.5h-1.5zM241.7 550.6h1.5v1.5h-1.5zM194.5 558.7h1.5v1.5h-1.5zM165.5 619.1h1.5v1.5h-1.5zM193.1 575.0h1.5v1.5h-1.5zM188.7 610.4h1.5v1.5h-1.5zM203.0 558.0h1.5v1.5h-1.5zM437.9 594.4h1.5v1.5h-1.5zM466.8 543.6h1.5v1.5h-1.5zM253.9 562.8h1.5v1.5h-1.5zM348.1 544.8h1.5v1.5h-1.5zM282.5 574.3h1.5v1.5h-1.5zM530.4 547.0h1.5v1.5h-1.5zM247.9 589.4h1.5v1.5h-1.5zM46.4 659.5h1.5v1.5h-1.5zM120.3 659.7h1.5v1.5h-1.5zM93.2 603.3h1.5v1.5h-1.5zM242.0 615.5h1.5v1.5h-1.5zM108.4 643.1h1.5v1.5h-1.5zM535.4 508.6h1.5v1.5h-1.5zM220.1 577.5h1.5v1.5h-1.5zM103.6 651.8h1.5v1.5h-1.5zM289.0 610.9h1.5v1.5h-1.5zM86.5 643.2h1.5v1.5h-1.5zM145.8 607.6h1.5v1.5h-1.5zM80.0 640.6h1.5v1.5h-1.5zM106.7 606.7h1.5v1.5h-1.5zM270.3 543.1h1.5v1.5h-1.5zM461.3 588.9h1.5v1.5h-1.5zM340.8 577.3h1.5v1.5h-1.5zM50.2 604.6h1.5v1.5h-1.5zM396.6 589.5h1.5v1.5h-1.5zM124.4 585.0h1.5v1.5h-1.5zM108.1 618.1h1.5v1.5h-1.5zM271.6 556.1h1.5v1.5h-1.5zM293.3 550.3h1.5v1.5h-1.5zM438.1 549.5h1.5v1.5h-1.5zM102.0 602.7h1.5v1.5h-1.5zM273.6 591.5h1.5v1.5h-1.5zM206.0 566.7h1.5v1.5h-1.5zM134.8 597.9h1.5v1.5h-1.5zM626.3 492.6h1.5v1.5h-1.5zM334.8 558.2h1.5v1.5h-1.5zM260.4 620.9h1.5v1.5h-1.5zM342.1 547.1h1.5v1.5h-1.5zM198.5 603.2h1.5v1.5h-1.5zM70.8 681.7h1.5v1.5h-1.5zM60.6 619.7h1.5v1.5h-1.5zM281.1 538.6h1.5v1.5h-1.5zM46.5 681.1h1.5v1.5h-1.5zM86.7 655.5h1.5v1.5h-1.5zM108.9 628.9h1.5v1.5h-1.5zM299.8 602.1h1.5v1.5h-1.5zM552.1 583.1h1.5v1.5h-1.5zM306.8 607.4h1.5v1.5h-1.5zM684.1 532.6h1.5v1.5h-1.5zM192.1 637.8h1.5v1.5h-1.5zM108.2 640.4h1.5v1.5h-1.5z" fill="#acac46"/>
<polyline points="45.7,259.5 48,260.2 52.1,251.8 54.8,253.1 58.5,258.9 61.8,253.8 64.9,258.2 68.6,273 71.6,254.5 75.6,271.6 80.7,261.5 84.4,267.6 86.4,270.3 89.5,255.2 92.8,280.4 97.3,268.2 101.1,263.4 104.9,266.3 109.7,256.7 113.5,270.1 116.3,280.6 120.2,262.4 126.8,252.9 133.5,275.8 137.3,265.3 140.2,268.2 143,295.8 146.9,266.3 152.6,289.2 156.4,266.3 160.2,287.3 164,289.2 166.9,290.1 170.7,275.8 173.6,291.1 177.4,279.6 181.2,288.2 185,275.8 189.8,280.6 192.7,287.3 195.5,276.8 198.4,296.8 201.3,278.7 204.5,296 207.8,278 211.5,306.3 218.1,279.6 223.9,285.3 228.6,311.1 232.4,290.1 235.3,290.1 239.1,310.1 242,282.4 247.7,293.9 251.5,290.1 256.3,317.7 261.1,294.8 266.8,323.5 272.1,291 277.3,317.7 280.2,317.7 284,301.5 289.7,301.5 292.6,320.6 297.3,293.9 301.1,302.5 305.9,304.4 309.7,343.5 316.4,311.1 324,313.9 329.8,310.1 334.5,334 340.3,312 348.9,345.4 353.6,325.4 358.4,334.9 362.2,325.4 365.5,341 369,327.5 383.9,327.7 384.8,323.9 388.6,351.5 390.5,336.3 395.3,355.3 398.2,326.7 401,355.3 404.8,327.7 410.6,340.1 415.3,335.3 418.2,352.5 425.8,335.3 436.3,363 440.2,340.1 444.9,340.1 449.7,371.6 453.5,345.8 458.3,359.2 464,352.5 470.7,357.3 476.4,384 480.2,357.3 486.9,374.4 495.5,361.1 506.9,393.5 512.7,378.2 517.4,395.4 521.3,380.2 526.7,381 530.5,405.8 534.3,384.8 540,379.1 544.8,389.6 557.2,389.6 564.8,401 567.7,402 570.6,411.5 575.3,386.7 584.9,427.7 587.7,395.3 593.5,406.8 596.3,414.4 598.2,413.4 603,433.5 608.7,411.5 615.4,442.1 619.2,420.1 623.1,421.1 625.9,445.9 630.7,430.6 635.5,444 639.3,427.7 643.1,449.7 646.1,426.6 649.2,439.3 652.2,436.3 655.3,446.4 659.3,465.8 663.4,450.5 666.4,461.7 669.5,448.5 673.6,469.8 678.1,454.6 686.3,485.1 689.8,465.8 697,485.1 701,468.3 710.2,495.3 714.7,482.5 720.3,483" fill="none" stroke="#1c5088" stroke-opacity="0.5" stroke-width="2.4" stroke-linejoin="round"/>
<polyline points="45.7,259.5 48,260.2 52.1,251.8 54.8,253.1 58.5,258.9 61.8,253.8 64.9,258.2 68.6,273 71.6,254.5 75.6,271.6 80.7,261.5 84.4,267.6 86.4,270.3 89.5,255.2 92.8,280.4 97.3,268.2 101.1,263.4 104.9,266.3 109.7,256.7 113.5,270.1 116.3,280.6 120.2,262.4 126.8,252.9 133.5,275.8 137.3,265.3 140.2,268.2 143,295.8 146.9,266.3 152.6,289.2 156.4,266.3 160.2,287.3 164,289.2 166.9,290.1 170.7,275.8 173.6,291.1 177.4,279.6 181.2,288.2 185,275.8 189.8,280.6 192.7,287.3 195.5,276.8 198.4,296.8 201.3,278.7 204.5,296 207.8,278 211.5,306.3 218.1,279.6 223.9,285.3 228.6,311.1 232.4,290.1 235.3,290.1 239.1,310.1 242,282.4 247.7,293.9 251.5,290.1 256.3,317.7 261.1,294.8 266.8,323.5 272.1,291 277.3,317.7 280.2,317.7 284,301.5 289.7,301.5 292.6,320.6 297.3,293.9 301.1,302.5 305.9,304.4 309.7,343.5 316.4,311.1 324,313.9 329.8,310.1 334.5,334 340.3,312 348.9,345.4 353.6,325.4 358.4,334.9 362.2,325.4 365.5,341 369,327.5 383.9,327.7 384.8,323.9 388.6,351.5 390.5,336.3 395.3,355.3 398.2,326.7 401,355.3 404.8,327.7 410.6,340.1 415.3,335.3 418.2,352.5 425.8,335.3 436.3,363 440.2,340.1 444.9,340.1 449.7,371.6 453.5,345.8 458.3,359.2 464,352.5 470.7,357.3 476.4,384 480.2,357.3 486.9,374.4 495.5,361.1 506.9,393.5 512.7,378.2 517.4,395.4 521.3,380.2 526.7,381 530.5,405.8 534.3,384.8 540,379.1 544.8,389.6 557.2,389.6 564.8,401 567.7,402 570.6,411.5 575.3,386.7 584.9,427.7 587.7,395.3 593.5,406.8 596.3,414.4 598.2,413.4 603,433.5 608.7,411.5 615.4,442.1 619.2,420.1 623.1,421.1 625.9,445.9 630.7,430.6 635.5,444 639.3,427.7 643.1,449.7 646.1,426.6 649.2,439.3 652.2,436.3 655.3,446.4 659.3,465.8 663.4,450.5 666.4,461.7 669.5,448.5 673.6,469.8 678.1,454.6 686.3,485.1 689.8,465.8 697,485.1 701,468.3 710.2,495.3 714.7,482.5 720.3,483" fill="none" stroke="#2fa2d4" stroke-width="1.05" stroke-linejoin="round"/>
<rect x="43" y="720" width="680" height="2" fill="#000"/>
<rect x="43" y="171" width="2" height="551" fill="#000"/>
<line x1="45.5" y1="722" x2="45.5" y2="725" stroke="#777" stroke-width="1"/>
<line x1="79.5" y1="722" x2="79.5" y2="723" stroke="#777" stroke-width="1"/>
<line x1="112.5" y1="722" x2="112.5" y2="725" stroke="#777" stroke-width="1"/>
<line x1="146.5" y1="722" x2="146.5" y2="723" stroke="#777" stroke-width="1"/>
<line x1="180.5" y1="722" x2="180.5" y2="725" stroke="#777" stroke-width="1"/>
<line x1="214.5" y1="722" x2="214.5" y2="723" stroke="#777" stroke-width="1"/>
<line x1="248.5" y1="722" x2="248.5" y2="725" stroke="#777" stroke-width="1"/>
<line x1="281.5" y1="722" x2="281.5" y2="723" stroke="#777" stroke-width="1"/>
<line x1="315.5" y1="722" x2="315.5" y2="725" stroke="#777" stroke-width="1"/>
<line x1="349.5" y1="722" x2="349.5" y2="723" stroke="#777" stroke-width="1"/>
<line x1="383.5" y1="722" x2="383.5" y2="725" stroke="#777" stroke-width="1"/>
<line x1="416.5" y1="722" x2="416.5" y2="723" stroke="#777" stroke-width="1"/>
<line x1="450.5" y1="722" x2="450.5" y2="725" stroke="#777" stroke-width="1"/>
<line x1="484.5" y1="722" x2="484.5" y2="723" stroke="#777" stroke-width="1"/>
<line x1="518.5" y1="722" x2="518.5" y2="725" stroke="#777" stroke-width="1"/>
<line x1="552.5" y1="722" x2="552.5" y2="723" stroke="#777" stroke-width="1"/>
<line x1="586.5" y1="722" x2="586.5" y2="725" stroke="#777" stroke-width="1"/>
<line x1="619.5" y1="722" x2="619.5" y2="723" stroke="#777" stroke-width="1"/>
<line x1="653.5" y1="722" x2="653.5" y2="725" stroke="#777" stroke-width="1"/>
<line x1="687.5" y1="722" x2="687.5" y2="723" stroke="#777" stroke-width="1"/>
<line x1="721.5" y1="722" x2="721.5" y2="725" stroke="#777" stroke-width="1"/>
<text x="40" y="176.5" text-anchor="end" font-family="Liberation Sans" font-size="11" fill="#222" stroke="#333" stroke-width="0.25">250</text>
<text x="726" y="176.5" font-family="Liberation Sans" font-size="11" fill="#222" stroke="#333" stroke-width="0.25">50</text>
<text x="40" y="285.8" text-anchor="end" font-family="Liberation Sans" font-size="11" fill="#222" stroke="#333" stroke-width="0.25">200</text>
<text x="726" y="285.8" font-family="Liberation Sans" font-size="11" fill="#222" stroke="#333" stroke-width="0.25">40</text>
<text x="40" y="395.1" text-anchor="end" font-family="Liberation Sans" font-size="11" fill="#222" stroke="#333" stroke-width="0.25">150</text>
<text x="726" y="395.1" font-family="Liberation Sans" font-size="11" fill="#222" stroke="#333" stroke-width="0.25">30</text>
<text x="40" y="504.4" text-anchor="end" font-family="Liberation Sans" font-size="11" fill="#222" stroke="#333" stroke-width="0.25">100</text>
<text x="726" y="504.4" font-family="Liberation Sans" font-size="11" fill="#222" stroke="#333" stroke-width="0.25">20</text>
<text x="40" y="613.7" text-anchor="end" font-family="Liberation Sans" font-size="11" fill="#222" stroke="#333" stroke-width="0.25">50</text>
<text x="726" y="613.7" font-family="Liberation Sans" font-size="11" fill="#222" stroke="#333" stroke-width="0.25">10</text>
<text x="45.5" y="735" text-anchor="middle" font-family="Liberation Sans" font-size="11" fill="#222" stroke="#333" stroke-width="0.25">0</text>
<text x="113.1" y="735" text-anchor="middle" font-family="Liberation Sans" font-size="11" fill="#222" stroke="#333" stroke-width="0.25">600</text>
<text x="180.7" y="735" text-anchor="middle" font-family="Liberation Sans" font-size="11" fill="#222" stroke="#333" stroke-width="0.25">1200</text>
<text x="248.3" y="735" text-anchor="middle" font-family="Liberation Sans" font-size="11" fill="#222" stroke="#333" stroke-width="0.25">1800</text>
<text x="315.9" y="735" text-anchor="middle" font-family="Liberation Sans" font-size="11" fill="#222" stroke="#333" stroke-width="0.25">2400</text>
<text x="383.5" y="735" text-anchor="middle" font-family="Liberation Sans" font-size="11" fill="#222" stroke="#333" stroke-width="0.25">3000</text>
<text x="451.1" y="735" text-anchor="middle" font-family="Liberation Sans" font-size="11" fill="#222" stroke="#333" stroke-width="0.25">3600</text>
<text x="518.7" y="735" text-anchor="middle" font-family="Liberation Sans" font-size="11" fill="#222" stroke="#333" stroke-width="0.25">4200</text>
<text x="586.3" y="735" text-anchor="middle" font-family="Liberation Sans" font-size="11" fill="#222" stroke="#333" stroke-width="0.25">4800</text>
<text x="653.9" y="735" text-anchor="middle" font-family="Liberation Sans" font-size="11" fill="#222" stroke="#333" stroke-width="0.25">5400</text>
<text x="720.0" y="735" text-anchor="middle" font-family="Liberation Sans" font-size="11" fill="#222" stroke="#333" stroke-width="0.25">6001gB</text>
<text x="45" y="169" font-family="Liberation Sans" font-size="11" fill="#222" stroke="#333" stroke-width="0.25">MB/s</text>
<text x="707" y="169" font-family="Liberation Sans" font-size="11" fill="#222" stroke="#333" stroke-width="0.25">ms</text>
</svg>

<!-- right panel -->
<div class="a" style="left:767px;top:152px;width:87px;height:28px;background:#e1e1e1;border:2px solid #0a78d4;"></div>
<div class="lbl" style="left:798px;top:157px;font-size:12.5px;color:#111">开始</div>
<div class="hsep" style="top:193px"></div>
<svg class="a" style="left:762px;top:204px" width="14" height="14"><circle cx="7" cy="7" r="6.1" fill="#fff" stroke="#333" stroke-width="1.1"/><circle cx="7" cy="7" r="3.3" fill="#222"/></svg>
<div class="lbl" style="left:779px;top:203px">读取</div>
<svg class="a" style="left:762px;top:225px" width="14" height="14"><circle cx="7" cy="7" r="6.1" fill="#fff" stroke="#333" stroke-width="1.1"/></svg>
<div class="lbl" style="left:779px;top:224px">写入</div>
<div class="hsep" style="top:245px"></div>
<div class="cb" style="top:259px"></div>
<div class="lbl" style="left:779px;top:257px">短行程</div>
<div class="a" style="left:762px;top:282px;width:74px;height:26px;border:1px solid #cfcfcf;background:#fff"></div>
<div class="a" style="left:817px;top:283px;width:18px;height:24px;background:#ececec;border-left:1px solid #dcdcdc"></div>
<div class="a" style="left:818px;top:294px;width:17px;height:2px;background:#dedede"></div>
<svg class="a" style="left:822px;top:286px" width="9" height="18"><path d="M1.8 5 L4.5 2.2 L7.2 5Z M1.8 12.5 L4.5 15.3 L7.2 12.5Z" fill="#555"/></svg>
<div class="lbl" style="left:767px;top:288px;font-size:12.5px;color:#8a8a8a">30</div>
<div class="lbl" style="left:850px;top:290px;font-size:12.5px">GB</div>
<div class="cb" style="top:323px"></div>
<svg class="a" style="left:763px;top:324px" width="12" height="12"><path d="M2 6 L5 9.2 L10.5 2.5" fill="none" stroke="#222" stroke-width="1.2"/></svg>
<div class="lbl" style="left:779px;top:321px">传输速率</div>
<div class="hsep" style="top:340px"></div>
<div class="lbl" style="left:762px;top:346px">最小</div>
<div class="box" style="top:365px"><span style="color:#2aa7e0">102.5 MB/s</span></div>
<div class="lbl" style="left:762px;top:390px">最大</div>
<div class="box" style="top:409px"><span style="color:#2aa7e0">214.0 MB/s</span></div>
<div class="lbl" style="left:762px;top:430px">平均</div>
<div class="box" style="top:449px"><span style="color:#2aa7e0">170.5 MB/s</span></div>
<div class="hsep" style="top:478px"></div>
<div class="cb" style="top:489px"></div>
<svg class="a" style="left:763px;top:490px" width="12" height="12"><path d="M2 6 L5 9.2 L10.5 2.5" fill="none" stroke="#222" stroke-width="1.2"/></svg>
<div class="lbl" style="left:779px;top:487px">访问时间</div>
<div class="box" style="top:507px"><span style="color:#f0f020">12.3 ms</span></div>
<div class="cb" style="top:535px"></div>
<svg class="a" style="left:763px;top:536px" width="12" height="12"><path d="M2 6 L5 9.2 L10.5 2.5" fill="none" stroke="#222" stroke-width="1.2"/></svg>
<div class="lbl" style="left:779px;top:533px">突发速率</div>
<div class="box" style="top:553px"><span style="color:#fff">376.6 MB/s</span></div>
<div class="lbl" style="left:762px;top:576px">CPU 使用率</div>
<div class="box" style="top:597px"><span style="color:#fff">3.4%</span></div>
<div class="lbl" style="left:762px;top:636px">通过次数</div>
<div class="a" style="left:762px;top:654px;width:92px;height:26px;border:1px solid #9a9a9a;background:#fff"></div>
<div class="a" style="left:837px;top:655px;width:16px;height:11px;background:#ececec;border:1px solid #c8c8c8"></div>
<div class="a" style="left:837px;top:667px;width:16px;height:11px;background:#ececec;border:1px solid #c8c8c8"></div>
<svg class="a" style="left:840px;top:657px" width="10" height="20"><path d="M2 6 L5 3 L8 6Z M2 14 L5 17 L8 14Z" fill="#111"/></svg>
<div class="lbl" style="left:768px;top:659px;font-size:12.5px">1</div>
<div class="a" style="left:763px;top:691px;width:63px;height:16px;background:#06b025"></div>
<div class="lbl" style="left:833px;top:692px;font-size:12.5px">1/1</div>

</body></html>
